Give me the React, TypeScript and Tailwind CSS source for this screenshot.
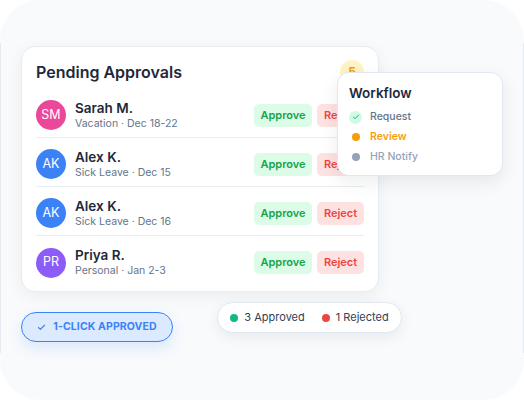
import { Check } from 'lucide-react'

type Request = {
  initials: string
  name: string
  detail: string
  color: string
}

const REQUESTS: Request[] = [
  { initials: 'SM', name: 'Sarah M.', detail: 'Vacation · Dec 18-22', color: 'bg-[#ec4899]' },
  { initials: 'AK', name: 'Alex K.', detail: 'Sick Leave · Dec 15', color: 'bg-[#3b82f6]' },
  { initials: 'AK', name: 'Alex K.', detail: 'Sick Leave · Dec 16', color: 'bg-[#3b82f6]' },
  { initials: 'PR', name: 'Priya R.', detail: 'Personal · Jan 2-3', color: 'bg-[#8b5cf6]' },
]

function RequestRow({ req, last }: { req: Request; last: boolean }) {
  return (
    <div
      className={`flex items-center h-[49px] pt-[4px] ${last ? '' : 'border-b border-[#e8edf3]'}`}
    >
      <div
        className={`w-[30px] h-[30px] rounded-full ${req.color} flex items-center justify-center text-white text-[12.5px]`}
      >
        {req.initials}
      </div>
      <div className="ml-[9px] flex flex-col">
        <span className="text-[13.5px] leading-[17px] font-semibold text-[#1e293b]">{req.name}</span>
        <span className="text-[10.5px] leading-[14px] text-[#64748b]">{req.detail}</span>
      </div>
      <div className="ml-auto flex gap-[5px]">
        <button className="h-[23px] w-[58px] rounded-[5px] bg-[#dcfce7] text-[#16a34a] text-[11px] font-semibold">
          Approve
        </button>
        <button className="h-[23px] w-[47px] rounded-[5px] bg-[#fee2e2] text-[#ef4444] text-[11px] font-semibold">
          Reject
        </button>
      </div>
    </div>
  )
}

function WorkflowPopover() {
  return (
    <div className="absolute left-[336px] top-[29px] w-[166px] h-[104px] rounded-[12px] bg-white border border-[#e2e8f0] shadow-[0_6px_18px_rgba(15,23,42,0.08)] pt-[11px] px-[11px] pb-[8px]">
      <div className="text-[13.5px] leading-[18px] font-semibold text-[#1e293b]">Workflow</div>
      <div className="mt-[5px] flex flex-col">
        <div className="flex items-center h-[20px]">
          <span className="w-[13px] h-[13px] rounded-full bg-[#d1fae5] flex items-center justify-center">
            <Check className="w-[8px] h-[8px] text-[#10b981]" strokeWidth={3} />
          </span>
          <span className="ml-[8px] text-[10.5px] font-medium text-[#64748b]">Request</span>
        </div>
        <div className="flex items-center h-[20px]">
          <span className="w-[13px] h-[13px] flex items-center justify-center">
            <span className="w-[8px] h-[8px] rounded-full bg-[#f59e0b]" />
          </span>
          <span className="ml-[8px] text-[10.5px] font-semibold text-[#f59e0b]">Review</span>
        </div>
        <div className="flex items-center h-[20px]">
          <span className="w-[13px] h-[13px] flex items-center justify-center">
            <span className="w-[8px] h-[8px] rounded-full bg-[#94a3b8]" />
          </span>
          <span className="ml-[8px] text-[10.5px] font-medium text-[#94a3b8]">HR Notify</span>
        </div>
      </div>
    </div>
  )
}

export default function App() {
  return (
    <div className="w-[524px] h-[400px] bg-white font-['Inter',sans-serif]">
      <div className="h-full rounded-[40px] bg-[#f8fafc] pt-[43px]">
        <div className="relative h-[310px] border-x border-[#e5e9f0] px-[20px] pt-[3px]">
          {/* main approvals card */}
          <div className="w-[358px] h-[246px] rounded-[14px] bg-white border border-[#e8edf3] shadow-[0_4px_16px_rgba(15,23,42,0.06)] px-[14px]">
            <div className="flex items-center justify-between pt-[8px] h-[42px]">
              <h2 className="text-[16px] leading-[24px] font-semibold text-[#1e293b]">Pending Approvals</h2>
              <span className="w-[24px] h-[24px] rounded-full bg-[#fef3c7] text-[#f59e0b] text-[12px] font-bold flex items-center justify-center">
                5
              </span>
            </div>
            {REQUESTS.map((r, i) => (
              <RequestRow key={i} req={r} last={i === REQUESTS.length - 1} />
            ))}
          </div>

          <WorkflowPopover />

          {/* footer pills */}
          <div className="flex items-start">
            <div className="mt-[20px] w-[152px] h-[30px] rounded-full border-[1.5px] border-[#3b82f6] bg-[#dbeafe] shadow-[0_6px_14px_rgba(59,130,246,0.15)] flex items-center justify-center gap-[7px] text-[#3b82f6]">
              <Check className="w-[9px] h-[9px]" strokeWidth={3} />
              <span className="text-[10.5px] font-bold tracking-[0.01em]">1-CLICK APPROVED</span>
            </div>
            <div className="mt-[10px] ml-[44px] w-[185px] h-[31px] rounded-full bg-white border border-[#e2e8f0] shadow-[0_4px_14px_rgba(15,23,42,0.07)] flex items-center justify-center gap-[17px] text-[11px] text-[#334155]">
              <span className="flex items-center gap-[6px]">
                <span className="w-[8px] h-[8px] rounded-full bg-[#10b981]" />
                3 Approved
              </span>
              <span className="flex items-center gap-[6px]">
                <span className="w-[8px] h-[8px] rounded-full bg-[#ef4444]" />
                1 Rejected
              </span>
            </div>
          </div>
        </div>
      </div>
    </div>
  )
}
